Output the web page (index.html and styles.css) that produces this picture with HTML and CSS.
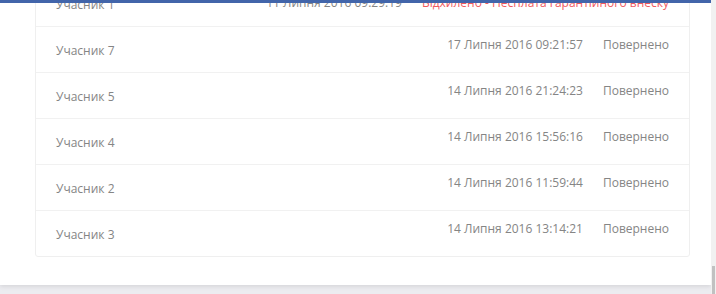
FILE: index.html
```html
<!DOCTYPE html>
<html lang="uk">
<head>
<meta charset="utf-8">
<link rel="stylesheet" href="styles.css">
</head>
<body>
<div class="topbar"></div>
<div class="layout">
  <div class="main">
    <div class="panel">
      <div class="card">
        <div class="row row-first">
          <div class="name">Учасник 1</div>
          <div class="date">11 Липня 2016 09:29:19</div>
          <div class="status rejected">Відхилено - Несплата гарантійного внеску</div>
        </div>
        <div class="row">
          <div class="name">Учасник 7</div>
          <div class="date">17 Липня 2016 09:21:57</div>
          <div class="status">Повернено</div>
        </div>
        <div class="row">
          <div class="name">Учасник 5</div>
          <div class="date">14 Липня 2016 21:24:23</div>
          <div class="status">Повернено</div>
        </div>
        <div class="row">
          <div class="name">Учасник 4</div>
          <div class="date">14 Липня 2016 15:56:16</div>
          <div class="status">Повернено</div>
        </div>
        <div class="row">
          <div class="name">Учасник 2</div>
          <div class="date">14 Липня 2016 11:59:44</div>
          <div class="status">Повернено</div>
        </div>
        <div class="row">
          <div class="name">Учасник 3</div>
          <div class="date">14 Липня 2016 13:14:21</div>
          <div class="status">Повернено</div>
        </div>
      </div>
    </div>
  </div>
  <div class="scrollbar"><div class="thumb"></div></div>
</div>
</body>
</html>
```
FILE: styles.css
```css
html, body {
  margin: 0;
  padding: 0;
  height: 100%;
  overflow: hidden;
}
body {
  font-family: "Open Sans", "Noto Sans", sans-serif;
  font-size: 12px;
  color: #858585;
  background: #ececf0;
}
.topbar {
  position: absolute;
  top: 0;
  left: 0;
  width: 711px;
  height: 3px;
  background: #4265aa;
  z-index: 5;
}
.layout {
  display: flex;
  height: 294px;
}
.main {
  flex: 1;
  overflow: hidden;
}
.panel {
  background: #fff;
  height: 285px;
  padding: 0 21px 0 35px;
  box-sizing: border-box;
  box-shadow: 0 1px 5px rgba(0, 0, 0, 0.12);
  overflow: hidden;
}
.card {
  margin-top: -20px;
  border: 1px solid #efefef;
  border-radius: 3px;
  background: #fff;
}
.row {
  display: flex;
  height: 45px;
  padding: 0 20px;
  border-top: 1px solid #f1f1f1;
  line-height: 18px;
}
.row:first-child {
  border-top: none;
}
.name {
  flex: 1;
  padding-top: 15px;
}
.date {
  padding-top: 9px;
}
.status {
  padding-top: 9px;
  margin-left: 20px;
}
.row-first .date,
.row-first .status {
  padding-top: 13px;
}
.rejected {
  color: #f05a5f;
}
.scrollbar {
  width: 5px;
  background: #f1f1f1;
  position: relative;
}
.thumb {
  position: absolute;
  left: 1px;
  right: 1px;
  bottom: 0;
  height: 28px;
  background: #c1c1c1;
}
```
